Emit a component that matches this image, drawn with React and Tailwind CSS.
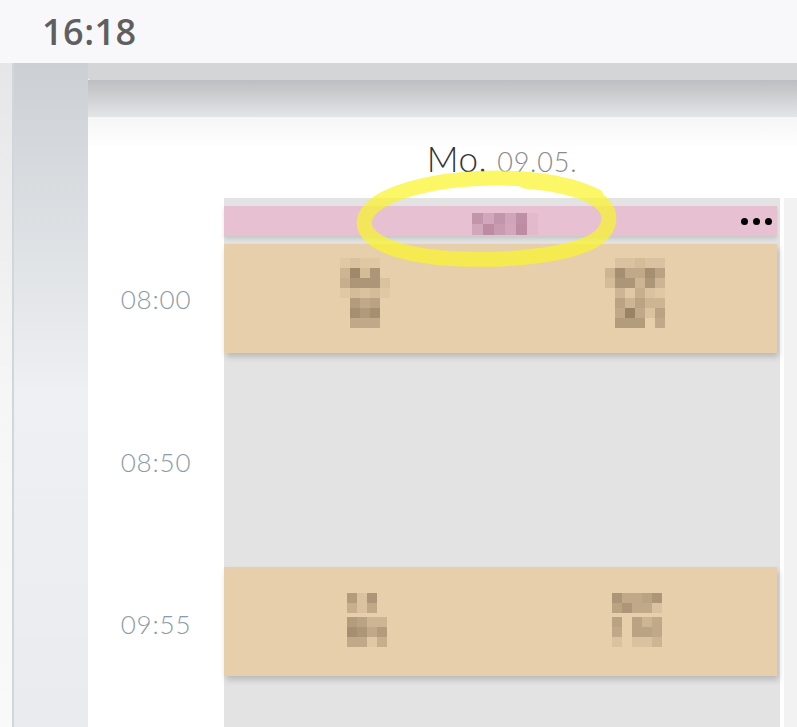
import React from 'react';

// pixelated (censored) labels, drawn as blocks
const Mosaic = ({ rows, size = 10, rgb = '100,80,55' }) => (
  <div className="flex flex-col">
    {rows.map((row, i) => (
      <div key={i} className="flex">
        {row.map((a, j) => (
          <div key={j} style={{ width: size, height: size, backgroundColor: `rgba(${rgb},${a})` }} />
        ))}
      </div>
    ))}
  </div>
);

const Event = ({ left, right, className = '' }) => (
  <div className={`relative h-[109px] mr-[3px] bg-[#e8cfab] shadow-[2px_4px_6px_rgba(0,0,0,0.18)] ${className}`}>
    <div className="absolute left-[116px] top-[14px]">{left}</div>
    <div className="absolute left-[381px] top-[14px]">{right}</div>
  </div>
);

export default function App() {
  const times = [
    { t: '08:00', mt: 'mt-[86px]' },
    { t: '08:50', mt: 'mt-[133px]' },
    { t: '09:55', mt: 'mt-[132px]' },
  ];

  return (
    <div className="relative w-[797px] h-[727px] overflow-hidden bg-white" style={{ fontFamily: 'Lato, "Noto Sans", sans-serif' }}>
      {/* status bar */}
      <div className="h-[63px] bg-[#f8f8fa] flex items-center pl-[42px]">
        <span className="text-[36px] font-semibold text-[#5f5f5f] tracking-[0.5px]" style={{ fontFamily: '"Open Sans", "Noto Sans", sans-serif' }}>
          16:18
        </span>
      </div>

      <div className="flex h-[664px]">
        {/* left gutter */}
        <div className="flex w-[88px] shrink-0">
          <div className="w-[12px] bg-gradient-to-b from-[#e6e6e8] via-[#f6f6f7] to-[#f9f9fa]" />
          <div className="w-[2px] bg-[#d2d5da]" />
          <div className="flex-1 bg-gradient-to-b from-[#ccd0d4] via-[#eef0f3] to-[#eaebee]" />
        </div>

        <div className="flex-1 flex flex-col">
          <div className="h-[17px] bg-[#d4d5d7] rounded-bl-[2px]" />
          <div className="h-[37px] bg-gradient-to-b from-[#bdbec1] to-[#e4e5e7]" />

          {/* day card */}
          <div className="flex-1 flex flex-col bg-white">
            <div className="h-[81px] flex items-center bg-gradient-to-b from-[#f6f6f6] to-white to-40%">
              <div className="w-[136px] shrink-0" />
              <div className="w-[556px] flex justify-center items-baseline gap-[10px] pt-[2px]">
                <span className="text-[35px] font-light text-[#333] tracking-[0.5px]">Mo.</span>
                <span className="text-[27px] font-light text-[#8b8b8b] tracking-[0.8px]">09.05.</span>
              </div>
            </div>

            <div className="flex-1 flex">
              {/* time column */}
              <div className="w-[136px] shrink-0 flex flex-col items-center">
                {times.map((x) => (
                  <div key={x.t} className={`${x.mt} h-[30px] leading-[30px] text-[26px] font-light text-[#8c9ba7] tracking-[0.8px]`}>
                    {x.t}
                  </div>
                ))}
              </div>

              {/* day column */}
              <div className="w-[556px] shrink-0 bg-[#e3e3e3] pt-[8px]">
                <div className="relative h-[30px] mr-[3px] bg-[#e7c0d1] shadow-[0_3px_4px_rgba(0,0,0,0.12)] flex items-center justify-end pr-[5px] gap-[5px]">
                  <div className="absolute left-[248px] top-[7px]">
                    <Mosaic
                      size={11}
                      rgb="130,70,100"
                      rows={[
                        [0.35, 0.2, 0.35, 0.22, 0.4, 0.05],
                        [0.2, 0.42, 0.3, 0.2, 0.42, 0.05],
                      ]}
                    />
                  </div>
                  <span className="w-[7px] h-[7px] rounded-full bg-black" />
                  <span className="w-[7px] h-[7px] rounded-full bg-black" />
                  <span className="w-[7px] h-[7px] rounded-full bg-black" />
                </div>

                <Event
                  className="mt-[8px]"
                  left={
                    <Mosaic
                      rows={[
                        [0.05, 0.1, 0.05, 0.05, 0, 0],
                        [0.2, 0.55, 0.15, 0.45, 0, 0],
                        [0.25, 0.45, 0.45, 0.45, 0.1, 0],
                        [0.05, 0.15, 0.1, 0.15, 0.05, 0],
                        [0, 0.4, 0.3, 0.35, 0, 0],
                        [0, 0.5, 0.42, 0.5, 0, 0],
                        [0, 0.3, 0.3, 0.3, 0, 0],
                      ]}
                    />
                  }
                  right={
                    <Mosaic
                      rows={[
                        [0, 0.1, 0.1, 0.15, 0.1, 0.1],
                        [0.2, 0.5, 0.3, 0.3, 0.5, 0.35],
                        [0.15, 0.45, 0.45, 0.2, 0.45, 0.2],
                        [0, 0.2, 0.05, 0.25, 0.1, 0.05],
                        [0, 0.35, 0.2, 0.35, 0.2, 0.2],
                        [0, 0.3, 0.6, 0.3, 0.1, 0.35],
                        [0, 0.4, 0.4, 0.4, 0, 0.3],
                      ]}
                    />
                  }
                />

                <Event
                  className="mt-[214px]"
                  left={
                    <div className="flex flex-col gap-[4px] pl-[7px] pt-[12px]">
                      <Mosaic rows={[[0.4, 0.1, 0.45], [0.25, 0.1, 0.3]]} />
                      <Mosaic rows={[[0.4, 0.35, 0.2, 0.2], [0.5, 0.45, 0.3, 0.4], [0.3, 0.3, 0.05, 0.25]]} />
                    </div>
                  }
                  right={
                    <div className="flex flex-col gap-[4px] pl-[7px] pt-[12px]">
                      <Mosaic rows={[[0.45, 0.3, 0.3, 0.35, 0.45], [0.35, 0.45, 0.3, 0.3, 0.1]]} />
                      <Mosaic rows={[[0.35, 0, 0.35, 0.2, 0.3], [0.3, 0, 0.35, 0.35, 0.3], [0.1, 0, 0.1, 0.1, 0.2]]} />
                    </div>
                  }
                />
              </div>

              <div className="w-[4px] shrink-0 bg-white" />
              <div className="flex-1 bg-[#f2f2f2]" />
            </div>
          </div>
        </div>
      </div>

      {/* yellow hand-drawn annotation */}
      <svg className="absolute inset-0 pointer-events-none" width="797" height="727" viewBox="0 0 797 727">
        <path
          d="M 525 181 C 592 187, 618 205, 606 229 C 594 252, 525 261, 462 259 C 400 257, 358 241, 365 218 C 372 195, 430 178, 498 178 C 545 178, 575 186, 596 196"
          fill="none"
          stroke="rgba(250,244,45,0.72)"
          strokeWidth="15"
          strokeLinecap="round"
          strokeLinejoin="round"
        />
      </svg>
    </div>
  );
}
